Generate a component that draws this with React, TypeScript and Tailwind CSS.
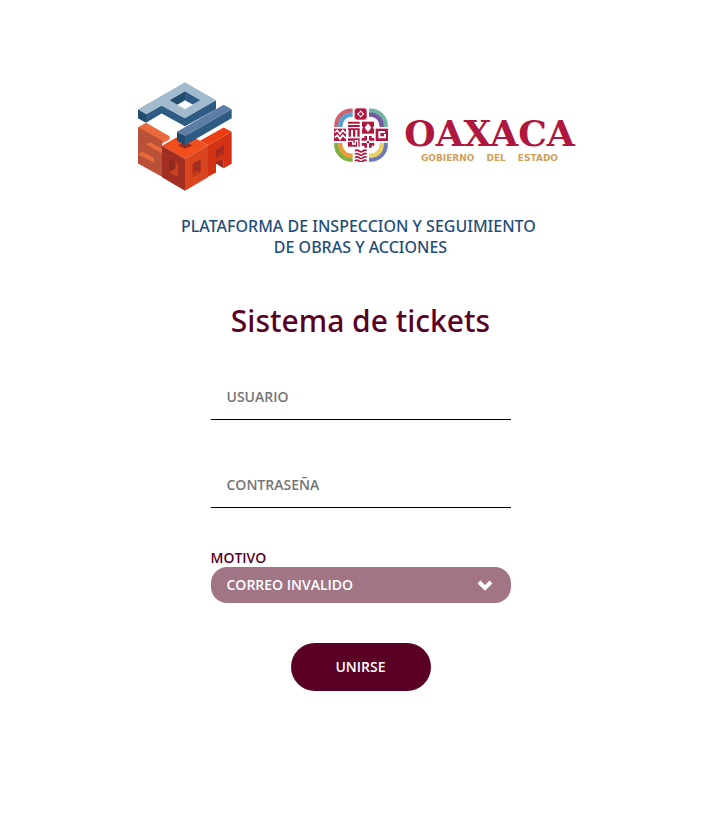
import { useState } from "react";

function PisoaLogo() {
  return (
    <svg role="img" aria-label="PISOA" viewBox="24 22 282 326" className="h-[109px] w-[94px] shrink-0">
      {/* S */}
      <path fill="#e96a3c" d="M24 157 48 144 119 184V193L96 207Z" />
      <path fill="#b95138" d="M24 157 96 197V306L24 266Z" />
      <path fill="#e96a3c" d="M48 208 60 202 96 222V235Z" />
      <path fill="#e96a3c" d="M24 238 36 230 72 250V264Z" />
      {/* A */}
      <path fill="#ea3f12" d="M210 198 281 158 305 171 234 211Z" />
      <path fill="#d33214" d="M234 211 305 171V267L281 280V254L258 267V293L234 306Z" />
      <path fill="#a02b20" d="M258 225 281 212V239L258 252Z" />
      <path fill="#c33018" d="M258 250 270 232 281 239 258 252Z" />
      <path fill="#a02b20" d="M258 260 281 254V280L258 267Z" />
      {/* O */}
      <path fill="#f04e1d" d="M96 213 165 173 234 211 165 252Z" />
      <path fill="#a22d21" d="M96 213 165 252V348L96 307Z" />
      <path fill="#d9451e" d="M165 252 234 211V307L165 348Z" />
      <path fill="#cc3f1f" d="M118 252 144 267V307L118 292Z" />
      <path fill="#8f281e" d="M118 252 136 262V281L118 292Z" />
      <path fill="#a22d21" d="M188 267 212 253V293L188 307Z" />
      <path fill="#c03a1e" d="M188 307V294L200 286 212 293Z" />
      <path fill="#9a2b20" d="M144 212 165 200 187 212 165 222Z" />
      {/* P */}
      <path fill="#2e5b83" d="M95 92 165 130V154L95 116L48 144V118Z" />
      <path fill="#234b6c" d="M24 103 48 117V144L24 130Z" />
      <path fill="#2e5b83" d="M165 129 258 76V103L165 154Z" />
      <path fill="#a1bacd" fillRule="evenodd" d="M24 103 165 22 258 76 165 130 95 92 48 118ZM119 76 165 103 211 76 165 49Z" />
      <path fill="#234b6c" d="M119 76 165 49V76L142 90Z" />
      <path fill="#2e5b83" d="M165 49 211 76 188 89 165 76Z" />
      {/* I */}
      <path fill="#5e7da5" d="M141 171 281 90 305 103 165 184Z" />
      <path fill="#234b6c" d="M141 171 165 184V211L141 198Z" />
      <path fill="#2e5b83" d="M165 184 305 103V130L165 211Z" />
    </svg>
  );
}

function OaxacaEmblem() {
  return (
    <svg aria-hidden="true" viewBox="26 25 162 162" className="h-[54px] w-[54px] shrink-0">
      <g fill="none" strokeWidth="13">
        <path stroke="#d0626e" d="M33 82V78A45 45 0 0 1 78 33H82" />
        <path stroke="#57a0d2" d="M45 82V78A33 33 0 0 1 78 45H82" />
        <path stroke="#6fb4a4" d="M131 33H136A45 45 0 0 1 181 78V82" />
        <path stroke="#7a569f" d="M131 45H136A33 33 0 0 1 169 78V82" />
        <path stroke="#7db142" d="M33 130V135A45 45 0 0 0 78 180H82" />
        <path stroke="#e99b3c" d="M45 130V135A33 33 0 0 0 78 168H82" />
        <path stroke="#6d7ab8" d="M181 130V135A45 45 0 0 1 136 180H131" />
        <path stroke="#ebd062" d="M169 130V135A33 33 0 0 1 136 168H131" />
      </g>
      <g fill="#b0173f">
        <path d="M88 26H124V60H88Z" />
        <path d="M26 87H62V124H26Z" />
        <path d="M151 87H188V124H151Z" />
        <path d="M68 66H103V72H68ZM68 76H103V82H68ZM68 86H103V91H68ZM70 91H77V111H70ZM83 91H90V111H83ZM96 91H103V111H96Z" />
        <path d="M110 66H146V102H110Z" />
        <path d="M68 116H103V141H68Z" />
        <path d="M117 109H125V122H117ZM131 109H139V122H131ZM117 131H125V144H117ZM131 131H139V144H131ZM109 115H122V123H109ZM134 115H147V123H134ZM109 130H122V138H109ZM134 130H147V138H134Z" />
        <circle cx="128" cy="127" r="4" />
      </g>
      <g fill="#fff">
        <path d="M106 32 111 38 117 43 111 48 106 54 101 48 95 43 101 38Z" />
        <path d="M88 26H94L88 32ZM118 26H124V32ZM88 54V60H94ZM124 54V60H118Z" />
        <path d="M128 71 138 84 128 97 118 84Z" />
        <path d="M110 80 114 84 110 88ZM146 80 142 84 146 88Z" />
      </g>
      <circle cx="106" cy="43" r="5" fill="#b0173f" />
      <g fill="none" stroke="#fff">
        <path strokeWidth="5" d="M28 98 36 92 44 103 52 92 62 101" />
        <path strokeWidth="5" d="M28 114 36 107 44 118 52 107 62 116" />
        <path strokeWidth="6" d="M179 97H162V113H179V103" />
        <path strokeWidth="4" d="M68 125H82V133H90V123H97V141" />
      </g>
      <g fill="none" stroke="#b0173f" strokeWidth="5">
        <path d="M89 154Q95 149 101 154T113 154T124 153" />
        <path d="M89 164Q95 159 101 164T113 164T124 163" />
        <path d="M89 174Q95 169 101 174T113 174T124 173" />
        <path d="M89 184Q95 179 101 184T113 184T124 183" />
      </g>
    </svg>
  );
}

function OaxacaLogo() {
  return (
    <div className="flex items-start gap-4">
      <OaxacaEmblem />
      <div className="flex flex-col items-center pt-1">
        <span className="font-['DejaVu_Serif',serif] text-[36px] leading-[42px] font-bold text-[#b0173f]">OAXACA</span>
        <span className="flex h-2 items-center gap-3 font-['DejaVu_Sans',sans-serif] text-[9px] leading-2 font-bold text-[#d0a05c]">
          <span>GOBIERNO</span>
          <span>DEL</span>
          <span>ESTADO</span>
        </span>
      </div>
    </div>
  );
}

const reasons = ["CORREO INVALIDO", "CONTRASEÑA OLVIDADA", "OTRO"];
const fieldClass =
  "h-[46px] w-full border-b border-black bg-transparent px-4 text-sm font-semibold text-black outline-none placeholder:text-[#757575]";

export default function App() {
  const [reason, setReason] = useState(reasons[0]);

  return (
    <main className="flex min-h-screen flex-col items-center bg-white px-4 pt-[82px] pb-12 font-['Open_Sans','Noto_Sans',sans-serif]">
      <header className="flex flex-col items-center">
        <div className="flex items-start justify-center gap-[102px] pr-2">
          <PisoaLogo />
          <div className="pt-[26px]">
            <OaxacaLogo />
          </div>
        </div>
        <p className="mt-[25px] text-center font-['Noto_Sans',sans-serif] text-base leading-[21px] font-medium text-[#1f4e79]">
          PLATAFORMA DE INSPECCION Y SEGUIMIENTO&nbsp;
          <br />
          DE OBRAS Y ACCIONES
        </p>
      </header>
      <h1 className="mt-[39px] font-['Noto_Sans',sans-serif] text-[30px] leading-12 font-medium text-[#5a0024]">
        Sistema de tickets
      </h1>
      <form className="mt-[29px] flex w-full max-w-[300px] flex-col" onSubmit={(e) => e.preventDefault()}>
        <input aria-label="Usuario" type="text" placeholder="USUARIO" className={fieldClass} />
        <input aria-label="Contraseña" type="password" placeholder="CONTRASEÑA" className={`mt-[42px] ${fieldClass}`} />
        <label htmlFor="motivo" className="mt-10 text-sm leading-[19px] font-semibold text-[#5a0024]">
          MOTIVO
        </label>
        <div className="relative">
          <select
            id="motivo"
            value={reason}
            onChange={(e) => setReason(e.target.value)}
            className="block h-9 w-full appearance-none rounded-2xl bg-[#a17486] px-4 text-sm font-semibold text-white outline-none"
          >
            {reasons.map((r) => (
              <option key={r}>{r}</option>
            ))}
          </select>
          <svg
            aria-hidden="true"
            viewBox="0 0 16 12"
            className="pointer-events-none absolute top-3 right-[18px] h-3 w-4"
          >
            <path d="M2 3 8 9 14 3" fill="none" stroke="#fff" strokeWidth="4" />
          </svg>
        </div>
        <button type="submit" className="mt-10 h-12 w-[140px] self-center rounded-3xl bg-[#5a0024] text-sm font-semibold text-white">
          UNIRSE
        </button>
      </form>
    </main>
  );
}
